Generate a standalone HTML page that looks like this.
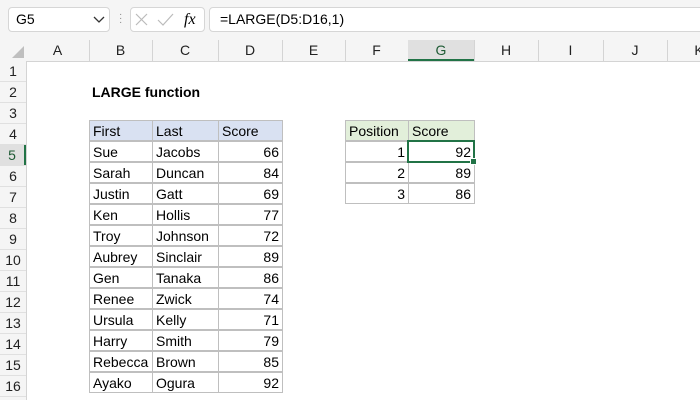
<!DOCTYPE html><html><head><style>
body{margin:0;width:700px;height:400px;overflow:hidden;background:#fff;font-family:"Liberation Sans",Calibri,sans-serif;position:relative}
.top{position:absolute;left:0;top:0;width:700px;height:40px;background:#f5f5f5}
.box{position:absolute;background:#fff;border:1px solid #d6d6d6;border-radius:4px;height:23px;top:7px;font-size:14px;line-height:23px}
.ch{position:absolute;top:40px;height:21px;background:#f5f5f5;border-bottom:1px solid #d4d4d4}
.c{position:absolute;font-size:14px;color:#222;text-align:center;line-height:21px}
.cell{position:absolute;font-size:14px;line-height:21px;height:21px;color:#000;box-sizing:border-box;padding:0 3px}
</style></head><body>
<div class="top"></div>
<div class="box" style="left:8px;width:100px"><span style="margin-left:7px">G5</span><svg style="position:absolute;left:84px;top:8px" width="12" height="8"><path d="M1 1L6 6L11 1" stroke="#333" fill="none" stroke-width="1.3"/></svg></div>
<div style="position:absolute;left:119px;top:13px;color:#888;font-size:10px;line-height:4px">·<br>·<br>·</div>
<div class="box" style="left:130px;width:73px"><svg width="73" height="23"><path d="M5 6L16 17M16 6L5 17" stroke="#bbb" stroke-width="1.2"/><path d="M27 12L32 17L42 6" stroke="#bbb" stroke-width="1.2" fill="none"/></svg><span style="position:absolute;left:53px;top:0;font-family:'Liberation Serif',serif;font-style:italic;font-size:16px">fx</span></div>
<div class="box" style="left:209px;width:500px"><span style="margin-left:10px">=LARGE(D5:D16,1)</span></div>
<div class="ch" style="left:0;width:700px"></div>
<div style="position:absolute;left:0;top:61px;width:26px;height:339px;background:#f5f5f5;border-right:1px solid #d4d4d4"></div>
<svg style="position:absolute;left:12px;top:46px" width="12" height="12"><path d="M12 0L12 12L0 12Z" fill="#bfbfbf"/></svg>
<div id="g"></div>
<script>
var cols=[["A",26,89],["B",89,152],["C",152,218],["D",218,282],["E",282,345],["F",345,408],["G",408,474],["H",474,538],["I",538,603],["J",603,667],["K",667,731]];
var h="";
cols.forEach(function(c){h+='<div class="c" style="left:'+c[1]+'px;top:40px;width:'+(c[2]-c[1])+'px;'+(c[0]=="G"?'background:#e0e0e0;border-bottom:2px solid #217346;height:19px;color:#1e5a34;':'')+'">'+c[0]+'</div><div style="position:absolute;left:'+c[2]+'px;top:40px;width:1px;height:21px;background:#d4d4d4"></div>';});
for(var r=1;r<=16;r++){var y=61+(r-1)*21;h+='<div class="c" style="left:0;top:'+y+'px;width:26px;'+(r==5?'background:#e0e0e0;color:#1e5a34;border-right:2px solid #217346;width:24px;':'')+'">'+r+'</div><div style="position:absolute;left:0;top:'+(y+20)+'px;width:26px;height:1px;background:#e0e0e0"></div>';}
var d=[["Sue","Jacobs",66],["Sarah","Duncan",84],["Justin","Gatt",69],["Ken","Hollis",77],["Troy","Johnson",72],["Aubrey","Sinclair",89],["Gen","Tanaka",86],["Renee","Zwick",74],["Ursula","Kelly",71],["Harry","Smith",79],["Rebecca","Brown",85],["Ayako","Ogura",92]];
function cell(x,y,w,t,st){return '<div class="cell" style="left:'+x+'px;top:'+y+'px;width:'+(w+1)+'px;border:1px solid #bfbfbf;'+(st||'')+'">'+t+'</div>';}
var hb='background:#d9e1f2;';
h+=cell(89,120,63,"First",hb)+cell(152,120,66,"Last",hb)+cell(218,120,64,"Score",hb);
d.forEach(function(p,i){var y=141+i*21;h+=cell(89,y,63,p[0])+cell(152,y,66,p[1])+cell(218,y,64,p[2],"text-align:right");});
var gb='background:#e2efda;';
h+=cell(345,120,63,"Position",gb)+cell(408,120,66,"Score",gb);
[[1,92],[2,89],[3,86]].forEach(function(p,i){var y=141+i*21;h+=cell(345,y,63,p[0],"text-align:right")+cell(408,y,66,p[1],"text-align:right");});
h+='<div style="position:absolute;left:407px;top:140px;width:64px;height:19px;border:2px solid #217346"></div><div style="position:absolute;left:470px;top:158px;width:5px;height:5px;background:#217346;border:1px solid #fff"></div>';
h+='<div class="cell" style="left:89px;top:82px;width:200px;font-weight:bold">LARGE function</div>';
document.getElementById("g").innerHTML=h;
</script>
</body></html>
